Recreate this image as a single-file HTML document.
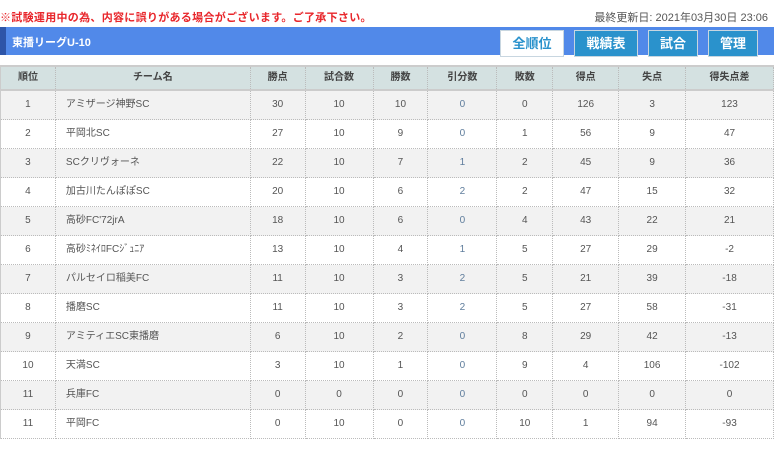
<!DOCTYPE html>
<html><head><meta charset="utf-8"><style>
body{margin:0;width:774px;height:454px;background:#fff;font-family:"Liberation Sans","Noto Sans CJK JP",sans-serif;position:relative;overflow:hidden}
.warn{position:absolute;left:0;top:9px;font-size:11px;color:#e8262b;font-weight:bold;letter-spacing:0.3px}
.upd{position:absolute;right:6px;top:9px;font-size:11px;color:#555}
.bar{position:absolute;left:0;top:27px;width:774px;height:28px;background:#5189e9;border-left:6px solid #2e55a8;box-sizing:border-box}
.bar span{position:absolute;left:6px;top:7px;color:#fff;font-size:11px;font-weight:bold}
.tab{position:absolute;top:30px;height:27px;box-sizing:border-box;font-size:13px;font-weight:bold;text-align:center;line-height:25px;color:#fff;background:#2a92cc;border:1px solid #c8d6e0}
table{position:absolute;left:0;top:65px;border-collapse:collapse;table-layout:fixed;font-size:10px;color:#555}
th{height:22px;background:#d4e1e1;border-top:2px solid #ccc;border-bottom:2px solid #ccc;border-right:1px dotted #bbb;font-weight:bold;color:#444;padding:0;line-height:14px}
td{height:28px;border-bottom:1px dotted #bbb;border-right:1px dotted #bbb;text-align:center;padding:0;line-height:14px;vertical-align:middle}
td span{display:inline-block;vertical-align:middle;line-height:14px}
tr:nth-child(even) td{background:#f2f2f2}
td.n{text-align:left;padding-left:10px}
td.d{color:#5f7d9c}
th:first-child,td:first-child{border-left:1px solid #ccc}
</style></head><body>
<div class="warn">※試験運用中の為、内容に誤りがある場合がございます。ご了承下さい。</div>
<div class="upd">最終更新日: 2021年03月30日 23:06</div>
<div class="bar"><span>東播リーグU-10</span></div>
<div class="tab" style="left:500px;width:64px;background:#fff;color:#2a92cc">全順位</div>
<div class="tab" style="left:574px;width:64px">戦績表</div>
<div class="tab" style="left:648px;width:50px">試合</div>
<div class="tab" style="left:708px;width:50px">管理</div>
<table>
<colgroup><col style="width:55px"><col style="width:195px"><col style="width:55px"><col style="width:68px"><col style="width:55px"><col style="width:69px"><col style="width:56px"><col style="width:66px"><col style="width:67px"><col style="width:88px"></colgroup>
<tr><th>順位</th><th>チーム名</th><th>勝点</th><th>試合数</th><th>勝数</th><th>引分数</th><th>敗数</th><th>得点</th><th>失点</th><th>得失点差</th></tr>
<tr><td>1</td><td class="n"><span>アミザージ神野SC</span></td><td>30</td><td>10</td><td>10</td><td class="d">0</td><td>0</td><td>126</td><td>3</td><td>123</td></tr>
<tr><td>2</td><td class="n"><span>平岡北SC</span></td><td>27</td><td>10</td><td>9</td><td class="d">0</td><td>1</td><td>56</td><td>9</td><td>47</td></tr>
<tr><td>3</td><td class="n"><span>SCクリヴォーネ</span></td><td>22</td><td>10</td><td>7</td><td class="d">1</td><td>2</td><td>45</td><td>9</td><td>36</td></tr>
<tr><td>4</td><td class="n"><span>加古川たんぽぽSC</span></td><td>20</td><td>10</td><td>6</td><td class="d">2</td><td>2</td><td>47</td><td>15</td><td>32</td></tr>
<tr><td>5</td><td class="n"><span>高砂FC'72jrA</span></td><td>18</td><td>10</td><td>6</td><td class="d">0</td><td>4</td><td>43</td><td>22</td><td>21</td></tr>
<tr><td>6</td><td class="n"><span>高砂ﾐﾈｲﾛFCｼﾞｭﾆｱ</span></td><td>13</td><td>10</td><td>4</td><td class="d">1</td><td>5</td><td>27</td><td>29</td><td>-2</td></tr>
<tr><td>7</td><td class="n"><span>パルセイロ稲美FC</span></td><td>11</td><td>10</td><td>3</td><td class="d">2</td><td>5</td><td>21</td><td>39</td><td>-18</td></tr>
<tr><td>8</td><td class="n"><span>播磨SC</span></td><td>11</td><td>10</td><td>3</td><td class="d">2</td><td>5</td><td>27</td><td>58</td><td>-31</td></tr>
<tr><td>9</td><td class="n"><span>アミティエSC東播磨</span></td><td>6</td><td>10</td><td>2</td><td class="d">0</td><td>8</td><td>29</td><td>42</td><td>-13</td></tr>
<tr><td>10</td><td class="n"><span>天満SC</span></td><td>3</td><td>10</td><td>1</td><td class="d">0</td><td>9</td><td>4</td><td>106</td><td>-102</td></tr>
<tr><td>11</td><td class="n"><span>兵庫FC</span></td><td>0</td><td>0</td><td>0</td><td class="d">0</td><td>0</td><td>0</td><td>0</td><td>0</td></tr>
<tr><td>11</td><td class="n"><span>平岡FC</span></td><td>0</td><td>10</td><td>0</td><td class="d">0</td><td>10</td><td>1</td><td>94</td><td>-93</td></tr>
</table>
</body></html>
